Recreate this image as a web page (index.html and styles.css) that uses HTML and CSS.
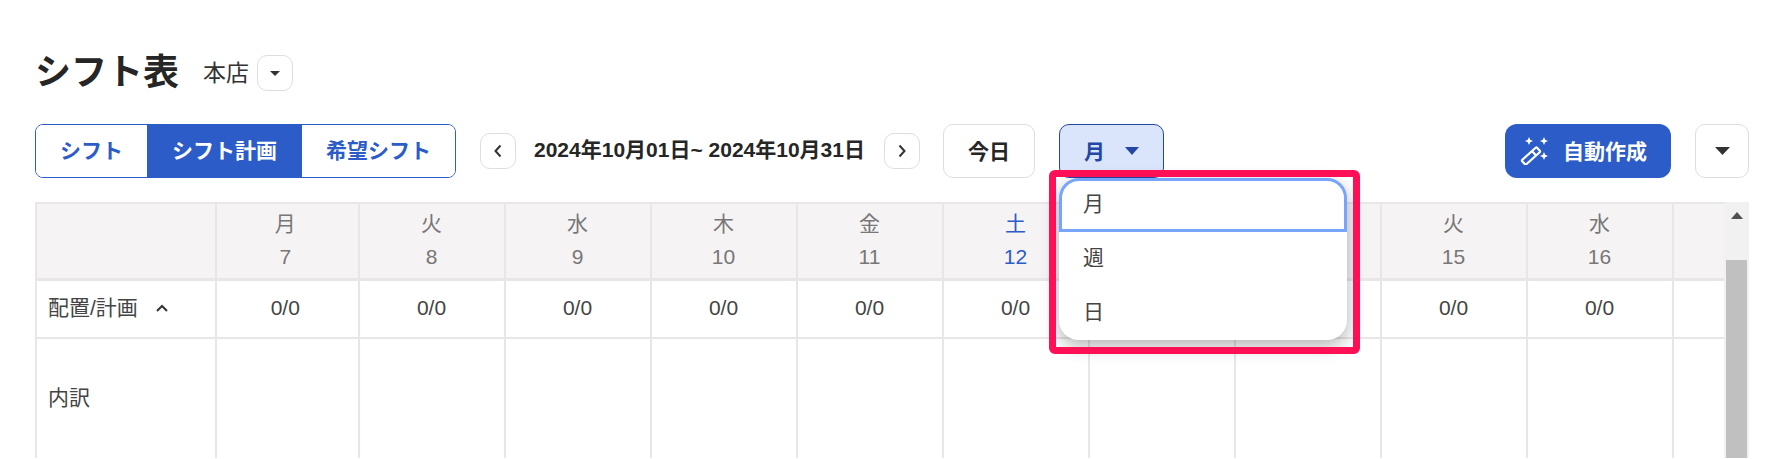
FILE: index.html
```html
<!DOCTYPE html>
<html lang="ja">
<head>
<meta charset="utf-8">
<title>シフト表</title>
<link rel="stylesheet" href="styles.css">
</head>
<body>
<main class="page">
  <header class="title-row">
    <h1 class="title">シフト表</h1>
    <span class="store">本店</span>
    <button class="btn btn-store"><svg class="caret" width="10" height="5" viewBox="0 0 10 5"><path d="M0 0h10L5 5z"/></svg></button>
  </header>

  <div class="toolbar">
    <div class="toggle">
      <button class="toggle-item t1">シフト</button>
      <button class="toggle-item t2 active">シフト計画</button>
      <button class="toggle-item t3">希望シフト</button>
    </div>
    <button class="btn btn-nav"><svg width="10" height="14" viewBox="0 0 10 14"><path d="M7.500 1.500 2.500 7l5 5.500" fill="none" stroke="#333" stroke-width="2"/></svg></button>
    <span class="range">2024年10月01日~ 2024年10月31日</span>
    <button class="btn btn-nav"><svg width="10" height="14" viewBox="0 0 10 14"><path d="M2.500 1.500 7.500 7l-5 5.500" fill="none" stroke="#333" stroke-width="2"/></svg></button>
    <button class="btn btn-today">今日</button>
    <button class="btn btn-view">月<svg class="caret-view" width="14" height="8" viewBox="0 0 14 8"><path d="M0 0h14L7 8z"/></svg></button>
    <button class="btn-auto">
      <svg class="wand" width="28" height="28" viewBox="0 0 28 28" fill="#fff"><g transform="rotate(-42 11 19)"><rect x="1" y="16" width="20" height="6" rx="1" fill="none" stroke="#fff" stroke-width="2.200"/><path d="M15 16v6" stroke="#fff" stroke-width="2.200"/></g><path d="M9 0l1.200 2.800L13 4l-2.800 1.200L9 8 7.800 5.200 5 4l2.800-1.200z"/><path d="M24 0l1.200 2.800L28 4l-2.800 1.200L24 8l-1.200-2.800L20 4l2.800-1.200z"/><path d="M24 15l1.200 2.800L28 19l-2.800 1.200L24 23l-1.200-2.800L20 19l2.800-1.200z"/></svg>
      自動作成
    </button>
    <button class="btn btn-more"><svg width="15" height="8" viewBox="0 0 15 8"><path d="M0 0h15L7.500 8z" fill="#333"/></svg></button>
  </div>

  <section class="sheet">
    <div class="grid">
      <div class="cell head"></div>
      <div class="cell head day first-day"><span>月</span><span>7</span></div>
      <div class="cell head day"><span>火</span><span>8</span></div>
      <div class="cell head day"><span>水</span><span>9</span></div>
      <div class="cell head day"><span>木</span><span>10</span></div>
      <div class="cell head day"><span>金</span><span>11</span></div>
      <div class="cell head day sat"><span>土</span><span>12</span></div>
      <div class="cell head day"><span>日</span><span>13</span></div>
      <div class="cell head day"><span>月</span><span>14</span></div>
      <div class="cell head day"><span>火</span><span>15</span></div>
      <div class="cell head day"><span>水</span><span>16</span></div>
      <div class="cell head"></div>

      <div class="cell label">配置/計画<svg class="chev" width="14" height="9" viewBox="0 0 14 9"><path d="M2 7l5-5 5 5" fill="none" stroke="#333" stroke-width="2"/></svg></div>
      <div class="cell num first-day">0/0</div>
      <div class="cell num">0/0</div>
      <div class="cell num">0/0</div>
      <div class="cell num">0/0</div>
      <div class="cell num">0/0</div>
      <div class="cell num">0/0</div>
      <div class="cell num">0/0</div>
      <div class="cell num">0/0</div>
      <div class="cell num">0/0</div>
      <div class="cell num">0/0</div>
      <div class="cell num"></div>

      <div class="cell label">内訳</div>
      <div class="cell"></div>
      <div class="cell"></div>
      <div class="cell"></div>
      <div class="cell"></div>
      <div class="cell"></div>
      <div class="cell"></div>
      <div class="cell"></div>
      <div class="cell"></div>
      <div class="cell"></div>
      <div class="cell"></div>
      <div class="cell"></div>
    </div>
    <div class="scrollbar">
      <svg class="scroll-up" width="12" height="7" viewBox="0 0 12 7"><path d="M0 7h12L6 0z" fill="#505050"/></svg>
      <div class="thumb"></div>
    </div>
  </section>
</main>

<ul class="menu">
  <li class="menu-item focused">月</li>
  <li class="menu-item">週</li>
  <li class="menu-item">日</li>
</ul>
<div class="highlight"></div>
</body>
</html>
```

FILE: styles.css
```css
* {
  box-sizing: border-box;
}

html,
body {
  margin: 0;
  height: 459px;
  overflow: hidden;
  background: #fff;
}

body {
  position: relative;
  font-family: "Liberation Sans", "Noto Sans CJK JP", sans-serif;
  color: #333;
}

button {
  font-family: inherit;
  cursor: pointer;
}

.page {
  padding: 55px 32px 0 35px;
}

.title-row {
  display: flex;
  align-items: center;
  height: 36px;
}

.title {
  margin: 0;
  font-size: 36px;
  font-weight: 700;
  color: #262626;
  width: 144px;
  line-height: 32px;
  white-space: nowrap;
}

.store {
  margin-left: 24px;
  padding-bottom: 4px;
  font-size: 23px;
  color: #333;
}

.btn {
  display: flex;
  align-items: center;
  justify-content: center;
  padding: 0;
  background: #fff;
  border: 1px solid #dedede;
  border-radius: 10px;
  color: #262626;
}

.btn-store {
  width: 36px;
  height: 36px;
  margin-left: 8px;
}

.caret {
  fill: #333;
}

.toolbar {
  display: flex;
  align-items: center;
  height: 54px;
  margin-top: 33px;
}

.toggle {
  display: flex;
  width: 421px;
  height: 54px;
  border: 1px solid #2b5cc8;
  border-radius: 8px;
  overflow: hidden;
}

.toggle-item {
  padding: 0 0 4px;
  border: 0;
  background: #fff;
  color: #2b5cc8;
  font-size: 21px;
  font-weight: 700;
}

.t1 {
  width: 111px;
}

.t2 {
  width: 155px;
}

.t3 {
  flex: 1;
}

.toggle-item.active {
  background: #2b5cc8;
  color: #fff;
}

.btn-nav {
  width: 36px;
  height: 36px;
}

.toggle + .btn-nav {
  margin-left: 24px;
}

.range {
  margin: -6px 19px 0 18px;
  font-size: 21px;
  font-weight: 700;
  color: #262626;
  white-space: nowrap;
}

.btn-today {
  width: 92px;
  height: 54px;
  margin-left: 23px;
  padding-bottom: 3px;
  font-size: 21px;
  font-weight: 700;
}

.btn-view {
  width: 105px;
  height: 54px;
  margin-left: 24px;
  padding-bottom: 3px;
  gap: 20px;
  background: #dae5fb;
  border-color: #2447a6;
  font-size: 21px;
  font-weight: 700;
  color: #2447a6;
}

.caret-view {
  fill: #2447a6;
  margin-top: 3px;
}

.btn-auto {
  display: flex;
  align-items: center;
  gap: 15px;
  width: 166px;
  height: 54px;
  margin-left: auto;
  padding: 0 0 3px 15px;
  border: 0;
  border-radius: 12px;
  background: #2b5cc8;
  color: #fff;
  font-size: 21px;
  font-weight: 700;
}

.wand {
  margin-top: 3px;
}

.btn-more {
  width: 54px;
  height: 54px;
  margin-left: 24px;
}

.sheet {
  display: flex;
  margin-top: 24px;
  height: 256px;
  overflow: hidden;
}

.grid {
  display: grid;
  grid-template-columns: 180px 142.500px repeat(9, 146px) 52px;
  grid-template-rows: 77px 58px 121px;
  width: 1689px;
  flex: none;
  overflow: hidden;
  border-top: 2px solid #e8e6e6;
  border-left: 2px solid #e8e6e6;
}

.cell {
  border-right: 2px solid #e8e6e6;
  border-bottom: 2px solid #e8e6e6;
  background: #fff;
}

.head {
  background: #f5f3f4;
  border-bottom-width: 3px;
}

.day {
  display: flex;
  flex-direction: column;
  align-items: center;
  gap: 6px;
  padding-top: 6px;
  font-size: 21px;
  line-height: 27px;
  color: #777;
}

.first-day {
  padding-right: 4px;
}

.sat {
  color: #2b5cc8;
}

.label {
  display: flex;
  align-items: center;
  padding: 0 0 6px 11px;
  font-size: 21px;
  color: #444;
}

.chev {
  margin: 4px 0 0 17px;
}

.num {
  display: flex;
  align-items: center;
  justify-content: center;
  padding-bottom: 3px;
  font-size: 21px;
  color: #444;
}

.num.first-day {
  padding-right: 4px;
}

.scrollbar {
  position: relative;
  flex: none;
  width: 25px;
  background: #f1f1f1;
}

.scroll-up {
  display: block;
  margin: 10px auto 0;
}

.thumb {
  height: 199px;
  margin: 41px 2px 0;
  background: #c0c0c0;
}

.menu {
  position: absolute;
  left: 1059px;
  top: 178px;
  width: 288px;
  height: 162px;
  margin: 0;
  padding: 0;
  list-style: none;
  background: #fff;
  border-radius: 20px;
  box-shadow: 0 6px 18px rgba(0, 0, 0, 0.3);
}

.menu-item {
  display: flex;
  align-items: center;
  height: 54px;
  padding: 0 0 6px 24px;
  font-size: 21px;
  color: #444;
}

.menu-item.focused {
  border: 3px solid #76a5fb;
  border-radius: 20px 20px 0 0;
  padding: 0 0 6px 21px;
}

.highlight {
  position: absolute;
  left: 1049px;
  top: 170px;
  width: 311px;
  height: 184px;
  border: 7px solid #ff0f55;
  border-radius: 6px;
}
```
